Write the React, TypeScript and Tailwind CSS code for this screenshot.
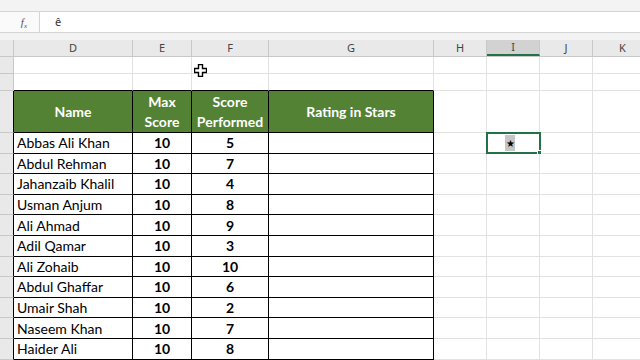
const cols = [
  { key: 'D', w: 'w-[119px]' },
  { key: 'E', w: 'w-[59px]' },
  { key: 'F', w: 'w-[77px]' },
  { key: 'G', w: 'w-[165px]' },
  { key: 'H', w: 'w-[53px]' },
  { key: 'I', w: 'w-[53px]' },
  { key: 'J', w: 'w-[53px]' },
  { key: 'K', w: 'w-[60px]' },
];

const people: [string, number][] = [
  ['Abbas Ali Khan', 5],
  ['Abdul Rehman', 7],
  ['Jahanzaib Khalil', 4],
  ['Usman Anjum', 8],
  ['Ali Ahmad', 9],
  ['Adil Qamar', 3],
  ['Ali Zohaib', 10],
  ['Abdul Ghaffar', 6],
  ['Umair Shah', 2],
  ['Naseem Khan', 7],
  ['Haider Ali', 8],
];

const cellFont = { fontFamily: 'Lato, "Open Sans", sans-serif' };

const GridCell = ({ w, top }: { w: string; top?: boolean }) => (
  <div className={`${w} shrink-0 border-r border-b ${top ? 'border-b-black' : 'border-b-[#e1e1e1]'} border-r-[#e1e1e1]`} />
);

const RightCells = ({ selected }: { selected?: boolean }) => (
  <>
    <div className="w-[53px] shrink-0 border-r border-b border-[#e1e1e1]" />
    <div className="w-[53px] shrink-0 border-r border-b border-[#e1e1e1] relative">
      {selected && (
        <div className="absolute -left-px -top-px w-[55px] h-[calc(100%+2px)] border-2 border-[#217346] flex items-center pl-[17px]">
          <span className="bg-[#c6c6c6] w-[10px] h-[16px] flex items-center justify-center text-[10px] text-black leading-none">★</span>
          <div className="absolute -right-[3px] -bottom-[3px] w-[5px] h-[5px] bg-[#217346] border border-white" />
        </div>
      )}
    </div>
    <div className="w-[53px] shrink-0 border-r border-b border-[#e1e1e1]" />
    <div className="w-[60px] shrink-0 border-r border-b border-[#e1e1e1]" />
  </>
);

export default function App() {
  return (
    <div className="w-[640px] h-[360px] overflow-hidden bg-white flex flex-col" style={{ fontFamily: '"Noto Sans", sans-serif' }}>
      <div className="h-[12px] shrink-0 bg-[#f3f3f3] border-b border-[#d4d4d4]" />
      <div className="h-[21px] shrink-0 flex bg-white border-b border-[#d4d4d4]">
        <div className="w-[40px] shrink-0 flex items-center justify-end pr-[12px] border-r border-[#d4d4d4] bg-[#fafafa]">
          <span className="text-[11px] italic text-[#555]" style={{ fontFamily: '"Liberation Serif", serif' }}>
            f<sub className="text-[7px]">x</sub>
          </span>
        </div>
        <div className="flex-1 flex items-center pl-[15px] text-[11px] text-[#333]">ê</div>
      </div>
      <div className="h-[7px] shrink-0 bg-[#f3f3f3]" />
      {/* column headers */}
      <div className="h-[17px] shrink-0 flex bg-[#e9e9e9] text-[11px] text-[#444] border-b border-[#c8c8c8]">
        <div className="w-[14px] shrink-0 border-r border-[#c8c8c8]" />
        {cols.map((c) => (
          <div
            key={c.key}
            className={`${c.w} shrink-0 flex items-center justify-center border-r border-[#c8c8c8] ${c.key === 'I' ? 'bg-[#d2d2d2] border-b-2 border-b-[#217346]' : ''}`}
          >
            {c.key}
          </div>
        ))}
      </div>
      {/* rows 1-2 */}
      {[0, 1].map((r) => (
        <div key={r} className="h-[17px] shrink-0 flex">
          <div className="w-[14px] shrink-0 bg-[#e9e9e9] border-r border-b border-[#c8c8c8]" />
          {cols.slice(0, 4).map((c) => (
            <GridCell key={c.key} w={c.w} top={r === 1} />
          ))}
          <RightCells />
        </div>
      ))}
      {/* table header */}
      <div className="h-[42px] shrink-0 flex" style={cellFont}>
        <div className="w-[14px] shrink-0 bg-[#e9e9e9] border-r border-r-black border-b border-b-[#c8c8c8]" />
        <div className="w-[119px] shrink-0 bg-[#548235] border-r border-b border-black flex items-center justify-center text-white font-bold text-[14px]">Name</div>
        <div className="w-[59px] shrink-0 bg-[#548235] border-r border-b border-black flex items-center justify-center text-center text-white font-bold text-[14px] leading-[20px]">
          Max<br />Score
        </div>
        <div className="w-[77px] shrink-0 bg-[#548235] border-r border-b border-black flex items-center justify-center text-center text-white font-bold text-[14px] leading-[20px]">
          Score<br />Performed
        </div>
        <div className="w-[165px] shrink-0 bg-[#548235] border-r border-b border-black flex items-center justify-center text-white font-bold text-[14px]">Rating in Stars</div>
        <RightCells />
      </div>
      {people.map(([name, score], i) => (
        <div key={name} className="h-[20.6px] shrink-0 flex text-[14px] text-black" style={cellFont}>
          <div className="w-[14px] shrink-0 bg-[#e9e9e9] border-r border-r-black border-b border-b-[#c8c8c8]" />
          <div className="w-[119px] shrink-0 border-r border-b border-black flex items-center pl-[3px]">{name}</div>
          <div className="w-[59px] shrink-0 border-r border-b border-black flex items-center justify-center font-bold">10</div>
          <div className="w-[77px] shrink-0 border-r border-b border-black flex items-center justify-center font-bold">{score}</div>
          <div className="w-[165px] shrink-0 border-r border-b border-black" />
          <RightCells selected={i === 0} />
        </div>
      ))}
      <svg className="absolute left-[194px] top-[64px]" width="13" height="13" viewBox="0 0 13 13">
        <path d="M4.5 0.5h4v4h4v4h-4v4h-4v-4h-4v-4h4z" fill="white" stroke="black" strokeWidth="1.4" />
      </svg>
    </div>
  );
}
